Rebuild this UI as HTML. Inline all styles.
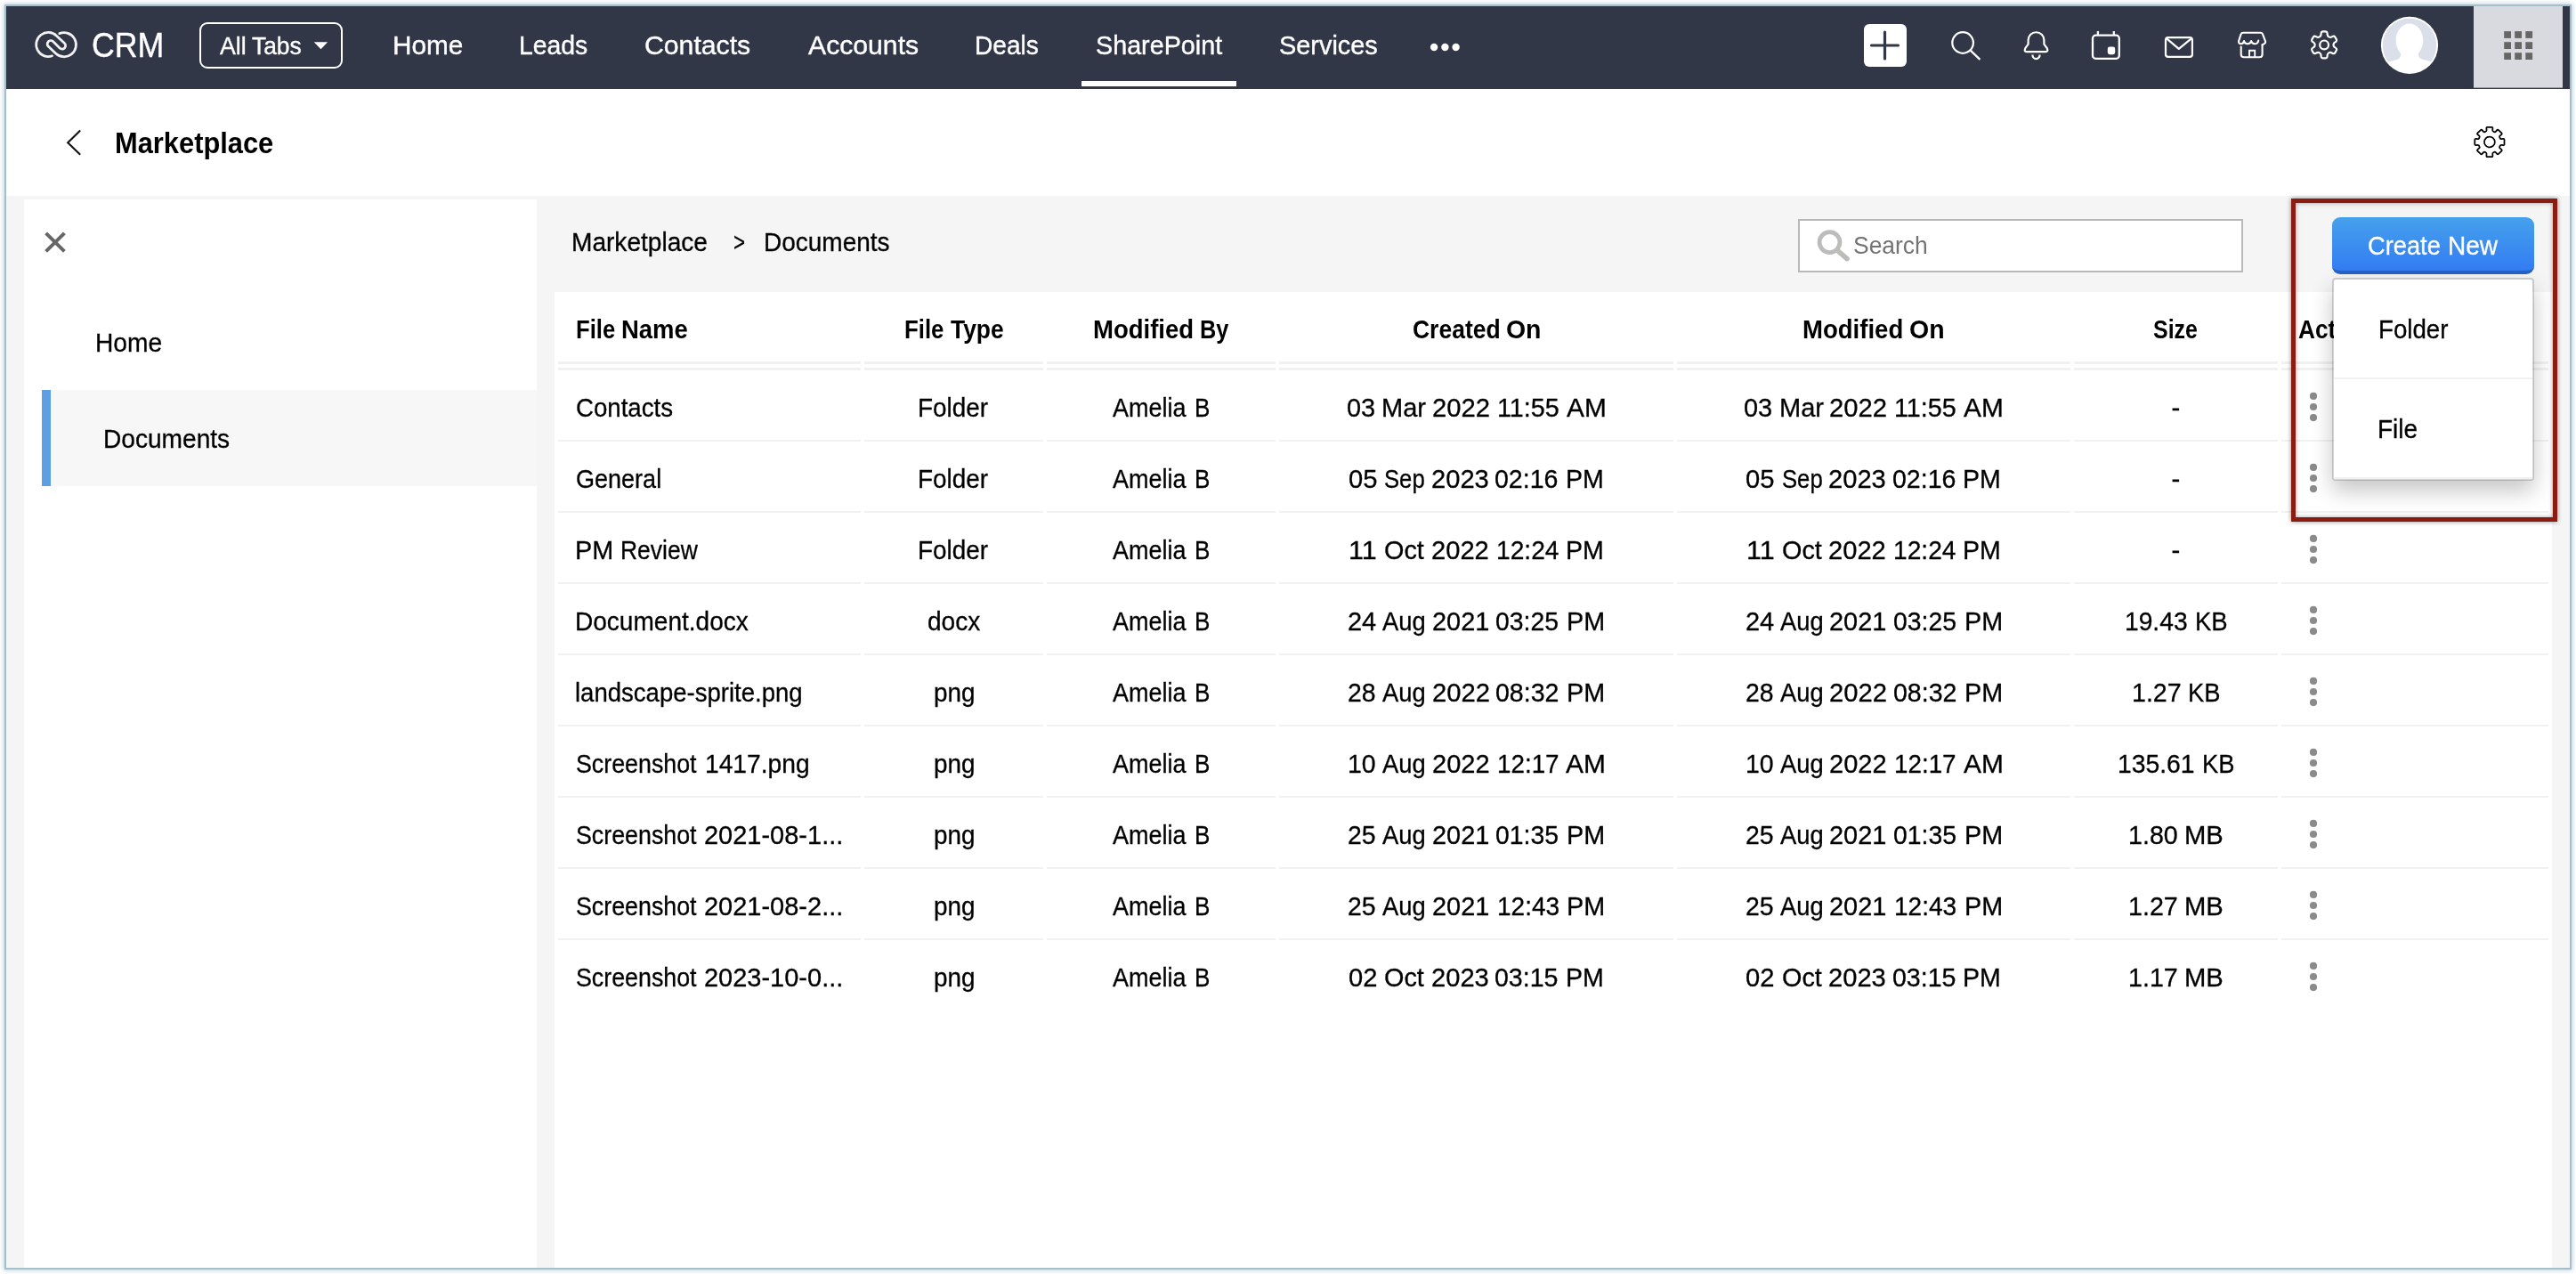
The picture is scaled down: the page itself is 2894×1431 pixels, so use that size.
<!DOCTYPE html>
<html lang="en">
<head>
<meta charset="utf-8">
<title>Marketplace - Documents</title>
<style>
html,body{margin:0;padding:0;background:#fff;}
body{width:2894px;height:1431px;overflow:hidden;position:relative;font-family:"Liberation Sans",sans-serif;}
#page{position:absolute;left:0;top:0;width:2894px;height:1431px;overflow:hidden;will-change:transform;}
#page>*{position:absolute;}
.t{position:absolute;white-space:pre;line-height:1;transform-origin:0 0;font-weight:400;font-family:"Liberation Sans",sans-serif;}
.t.b{font-weight:700;}
.ln{background:#f1f1f1;}
svg{overflow:visible;}
.kb{width:8.6px;height:8.6px;border-radius:50%;background:#8b8b8b;}
</style>
</head>
<body>
<div id="page">
<!-- frame -->
<div id="frame" style="left:5px;top:5px;width:2880px;height:1417px;border:2px solid #a5becc;box-shadow:0 0 5px 1px rgba(140,175,195,.55);"></div>
<!-- navbar -->
<div id="nav" style="left:7px;top:7px;width:2880px;height:93px;background:#323748;"></div>
<svg style="left:0;top:0;" width="2894" height="1431" viewBox="0 0 2894 1431"><path d="M58.61 62.81 A13.55 13.55 0 1 1 63.48 40.13 L72.44 48.54 A3.85 3.85 0 0 1 67.08 54.07 L59.57 46.58 A3.85 3.85 0 0 0 54.20 52.09 L62.58 60.03 A13.55 13.55 0 1 0 66.82 37.64" fill="none" stroke="#f1f1f1" stroke-width="2.75" stroke-linecap="round" stroke-linejoin="round"/><rect x="225" y="26" width="159" height="50" rx="8" fill="none" stroke="#fff" stroke-width="2"/><rect x="1215" y="91" width="174" height="6" fill="#fff"/><path d="M352.8 47.2 H368.1 L360.45 55.2 Z" fill="#fff"/><circle cx="1611.1" cy="53" r="4.2" fill="#fff"/><circle cx="1623.4" cy="53" r="4.2" fill="#fff"/><circle cx="1635.6" cy="53" r="4.2" fill="#fff"/><rect x="2094" y="27" width="48" height="48" rx="6" fill="#fff"/><path d="M2102.5 51 H2132.5 M2117.5 36 V66" stroke="#323748" stroke-width="3.2" stroke-linecap="round" fill="none"/><circle cx="2205.1" cy="48" r="11.8" fill="none" stroke="#fff" stroke-width="2.2"/><path d="M2213.5 56.4 L2224.4 66.9" stroke="#fff" stroke-width="2.3" fill="none"/><path d="M2278.6 49.6 L2275.3 54.2 Q2273.6 58.1 2276.8 58.1 H2298.2 Q2301.4 58.1 2299.7 54.2 L2296.4 49.6 V45.1 A8.9 8.9 0 0 0 2278.6 45.1 Z" fill="none" stroke="#fff" stroke-width="2.2" stroke-linejoin="round"/><path d="M2283.4 61.6 A4.1 4.6 0 0 0 2291.6 61.6" fill="none" stroke="#fff" stroke-width="2.2"/><rect x="2351" y="39.7" width="29.8" height="26.1" rx="3.4" fill="none" stroke="#fff" stroke-width="2.3"/><path d="M2356.9 34.9 V40 M2374.8 34.9 V40" stroke="#fff" stroke-width="2.3" fill="none"/><rect x="2367.8" y="52.6" width="8.4" height="8.6" rx="2.4" fill="#fff"/><rect x="2433" y="42.1" width="29.9" height="21.7" rx="2.8" fill="none" stroke="#fff" stroke-width="2.2"/><path d="M2433.6 42.8 L2447.8 54.8 L2462.4 42.8" fill="none" stroke="#fff" stroke-width="2.2" stroke-linejoin="round"/><path d="M2517.7 52.6 V61 Q2517.7 64.3 2521 64.3 H2538.3 Q2541.6 64.3 2541.6 61 V50.5" fill="none" stroke="#fff" stroke-width="2.1" stroke-linecap="round"/><path d="M2541.6 50.2 Q2545.5 49 2545.1 46.6 L2542.1 38.6 Q2541.6 36.8 2539.6 36.8 H2520.2 Q2518.2 36.8 2517.5 38.6 L2515.0 46.4 Q2514.9 49.4 2517.8 49.2 Q2520.4 49 2521 46 Q2521.6 49.2 2525 49.2 Q2528.5 49.2 2529.1 46 Q2529.8 49.2 2533.2 49.2 Q2536.6 49.2 2537.2 45.6" fill="none" stroke="#fff" stroke-width="2.1" stroke-linecap="round" stroke-linejoin="round"/><path d="M2527 64.2 V56.8 H2533.2 V64.2" fill="none" stroke="#fff" stroke-width="1.9"/><path d="M2605.90 41.39 Q2607.67 40.37 2607.60 38.33 L2607.59 37.90 Q2607.51 35.42 2609.99 35.42 L2612.21 35.42 Q2614.69 35.42 2614.61 37.90 L2614.60 38.33 Q2614.53 40.37 2616.30 41.39 L2616.30 41.39 Q2618.07 42.41 2619.80 41.34 L2620.17 41.11 Q2622.28 39.81 2623.52 41.95 L2624.63 43.87 Q2625.86 46.02 2623.68 47.19 L2623.30 47.40 Q2621.50 48.36 2621.50 50.40 L2621.50 50.40 Q2621.50 52.44 2623.30 53.40 L2623.68 53.61 Q2625.86 54.78 2624.63 56.93 L2623.52 58.85 Q2622.28 60.99 2620.17 59.69 L2619.80 59.46 Q2618.07 58.39 2616.30 59.41 L2616.30 59.41 Q2614.53 60.43 2614.60 62.47 L2614.61 62.90 Q2614.69 65.38 2612.21 65.38 L2609.99 65.38 Q2607.51 65.38 2607.59 62.90 L2607.60 62.47 Q2607.67 60.43 2605.90 59.41 L2605.90 59.41 Q2604.13 58.39 2602.40 59.46 L2602.03 59.69 Q2599.92 60.99 2598.68 58.85 L2597.57 56.93 Q2596.34 54.78 2598.52 53.61 L2598.90 53.40 Q2600.70 52.44 2600.70 50.40 L2600.70 50.40 Q2600.70 48.36 2598.90 47.40 L2598.52 47.19 Q2596.34 46.02 2597.57 43.87 L2598.68 41.95 Q2599.92 39.81 2602.03 41.11 L2602.40 41.34 Q2604.13 42.41 2605.90 41.39 Z" fill="none" stroke="#fff" stroke-width="2.2" stroke-linejoin="round"/><circle cx="2611.1" cy="50.4" r="4.9" fill="none" stroke="#fff" stroke-width="2.2"/><defs><clipPath id="avc"><circle cx="2707" cy="50.9" r="30.4"/></clipPath></defs><circle cx="2707" cy="50.9" r="32.1" fill="#fff"/><circle cx="2707" cy="50.9" r="30.2" fill="#dbdfe9"/><g clip-path="url(#avc)" fill="#fff"><ellipse cx="2706.9" cy="45.4" rx="15.3" ry="18.8"/><path d="M2697.5 54 L2697 62 Q2696.5 66.5 2691 67.6 Q2682 69.6 2676 73 V90 H2738 V72.5 Q2732 69 2724 67.3 Q2718 66.4 2717 62 L2716.5 54 Z"/></g><rect x="2779" y="7" width="100" height="91.6" fill="#d9dadf"/><rect x="2813.2" y="35.1" width="7.8" height="7.8" fill="#666"/><rect x="2813.2" y="47.2" width="7.8" height="7.8" fill="#666"/><rect x="2813.2" y="59.2" width="7.8" height="7.8" fill="#666"/><rect x="2825.2" y="35.1" width="7.8" height="7.8" fill="#666"/><rect x="2825.2" y="47.2" width="7.8" height="7.8" fill="#666"/><rect x="2825.2" y="59.2" width="7.8" height="7.8" fill="#666"/><rect x="2837.3" y="35.1" width="7.8" height="7.8" fill="#666"/><rect x="2837.3" y="47.2" width="7.8" height="7.8" fill="#666"/><rect x="2837.3" y="59.2" width="7.8" height="7.8" fill="#666"/></svg>
<!-- title bar -->
<svg style="left:0;top:0;" width="2894" height="1431" viewBox="0 0 2894 1431"><path d="M90.2 146.6 L76.2 160.2 L90.2 173.8" fill="none" stroke="#111" stroke-width="2.1"/><path d="M2792.55 147.78 Q2793.66 147.32 2793.56 146.13 L2793.38 144.09 Q2793.27 142.89 2794.47 142.89 L2799.33 142.89 Q2800.53 142.89 2800.42 144.09 L2800.24 146.13 Q2800.14 147.32 2801.25 147.78 L2802.11 148.14 Q2803.22 148.60 2803.99 147.68 L2805.31 146.11 Q2806.08 145.19 2806.93 146.04 L2810.36 149.47 Q2811.21 150.32 2810.29 151.09 L2808.72 152.41 Q2807.80 153.18 2808.26 154.29 L2808.62 155.15 Q2809.08 156.26 2810.27 156.16 L2812.31 155.98 Q2813.51 155.87 2813.51 157.07 L2813.51 161.93 Q2813.51 163.13 2812.31 163.02 L2810.27 162.84 Q2809.08 162.74 2808.62 163.85 L2808.26 164.71 Q2807.80 165.82 2808.72 166.59 L2810.29 167.91 Q2811.21 168.68 2810.36 169.53 L2806.93 172.96 Q2806.08 173.81 2805.31 172.89 L2803.99 171.32 Q2803.22 170.40 2802.11 170.86 L2801.25 171.22 Q2800.14 171.68 2800.24 172.87 L2800.42 174.91 Q2800.53 176.11 2799.33 176.11 L2794.47 176.11 Q2793.27 176.11 2793.38 174.91 L2793.56 172.87 Q2793.66 171.68 2792.55 171.22 L2791.69 170.86 Q2790.58 170.40 2789.81 171.32 L2788.49 172.89 Q2787.72 173.81 2786.87 172.96 L2783.44 169.53 Q2782.59 168.68 2783.51 167.91 L2785.08 166.59 Q2786.00 165.82 2785.54 164.71 L2785.18 163.85 Q2784.72 162.74 2783.53 162.84 L2781.49 163.02 Q2780.29 163.13 2780.29 161.93 L2780.29 157.07 Q2780.29 155.87 2781.49 155.98 L2783.53 156.16 Q2784.72 156.26 2785.18 155.15 L2785.54 154.29 Q2786.00 153.18 2785.08 152.41 L2783.51 151.09 Q2782.59 150.32 2783.44 149.47 L2786.87 146.04 Q2787.72 145.19 2788.49 146.11 L2789.81 147.68 Q2790.58 148.60 2791.69 148.14 Z" fill="none" stroke="#000" stroke-width="1.75" stroke-linejoin="round"/><circle cx="2796.9" cy="159.5" r="5.95" fill="none" stroke="#000" stroke-width="1.7"/></svg>
<!-- gray area -->
<div style="left:7px;top:220px;width:2880px;height:1204px;background:#f5f5f5;"></div>
<!-- sidebar -->
<div style="left:27px;top:224px;width:576px;height:1200px;background:#fff;"></div>
<div style="left:47px;top:438px;width:556px;height:108px;background:#f7f7f7;"></div>
<div style="left:47px;top:438px;width:10px;height:108px;background:#5c9fe2;"></div>
<svg style="left:0;top:0;" width="2894" height="1431" viewBox="0 0 2894 1431"><path d="M51.6 261.8 L72.4 282.4 M72.4 261.8 L51.6 282.4" stroke="#666" stroke-width="4" fill="none"/></svg>
<!-- table -->
<div style="left:623px;top:328px;width:2244px;height:1096px;background:#fff;"></div>
<div class="ln" style="left:627px;top:406px;width:340px;height:3px"></div>
<div class="ln" style="left:971px;top:406px;width:201px;height:3px"></div>
<div class="ln" style="left:1176px;top:406px;width:257px;height:3px"></div>
<div class="ln" style="left:1437px;top:406px;width:443px;height:3px"></div>
<div class="ln" style="left:1884px;top:406px;width:442px;height:3px"></div>
<div class="ln" style="left:2330px;top:406px;width:229px;height:3px"></div>
<div class="ln" style="left:2563px;top:406px;width:300px;height:3px"></div>
<div class="ln" style="left:627px;top:413px;width:340px;height:3px"></div>
<div class="ln" style="left:971px;top:413px;width:201px;height:3px"></div>
<div class="ln" style="left:1176px;top:413px;width:257px;height:3px"></div>
<div class="ln" style="left:1437px;top:413px;width:443px;height:3px"></div>
<div class="ln" style="left:1884px;top:413px;width:442px;height:3px"></div>
<div class="ln" style="left:2330px;top:413px;width:229px;height:3px"></div>
<div class="ln" style="left:2563px;top:413px;width:300px;height:3px"></div>
<div class="ln" style="left:627px;top:494px;width:340px;height:2px"></div>
<div class="ln" style="left:971px;top:494px;width:201px;height:2px"></div>
<div class="ln" style="left:1176px;top:494px;width:257px;height:2px"></div>
<div class="ln" style="left:1437px;top:494px;width:443px;height:2px"></div>
<div class="ln" style="left:1884px;top:494px;width:442px;height:2px"></div>
<div class="ln" style="left:2330px;top:494px;width:229px;height:2px"></div>
<div class="ln" style="left:2563px;top:494px;width:300px;height:2px"></div>
<div class="ln" style="left:627px;top:574px;width:340px;height:2px"></div>
<div class="ln" style="left:971px;top:574px;width:201px;height:2px"></div>
<div class="ln" style="left:1176px;top:574px;width:257px;height:2px"></div>
<div class="ln" style="left:1437px;top:574px;width:443px;height:2px"></div>
<div class="ln" style="left:1884px;top:574px;width:442px;height:2px"></div>
<div class="ln" style="left:2330px;top:574px;width:229px;height:2px"></div>
<div class="ln" style="left:2563px;top:574px;width:300px;height:2px"></div>
<div class="ln" style="left:627px;top:654px;width:340px;height:2px"></div>
<div class="ln" style="left:971px;top:654px;width:201px;height:2px"></div>
<div class="ln" style="left:1176px;top:654px;width:257px;height:2px"></div>
<div class="ln" style="left:1437px;top:654px;width:443px;height:2px"></div>
<div class="ln" style="left:1884px;top:654px;width:442px;height:2px"></div>
<div class="ln" style="left:2330px;top:654px;width:229px;height:2px"></div>
<div class="ln" style="left:2563px;top:654px;width:300px;height:2px"></div>
<div class="ln" style="left:627px;top:734px;width:340px;height:2px"></div>
<div class="ln" style="left:971px;top:734px;width:201px;height:2px"></div>
<div class="ln" style="left:1176px;top:734px;width:257px;height:2px"></div>
<div class="ln" style="left:1437px;top:734px;width:443px;height:2px"></div>
<div class="ln" style="left:1884px;top:734px;width:442px;height:2px"></div>
<div class="ln" style="left:2330px;top:734px;width:229px;height:2px"></div>
<div class="ln" style="left:2563px;top:734px;width:300px;height:2px"></div>
<div class="ln" style="left:627px;top:814px;width:340px;height:2px"></div>
<div class="ln" style="left:971px;top:814px;width:201px;height:2px"></div>
<div class="ln" style="left:1176px;top:814px;width:257px;height:2px"></div>
<div class="ln" style="left:1437px;top:814px;width:443px;height:2px"></div>
<div class="ln" style="left:1884px;top:814px;width:442px;height:2px"></div>
<div class="ln" style="left:2330px;top:814px;width:229px;height:2px"></div>
<div class="ln" style="left:2563px;top:814px;width:300px;height:2px"></div>
<div class="ln" style="left:627px;top:894px;width:340px;height:2px"></div>
<div class="ln" style="left:971px;top:894px;width:201px;height:2px"></div>
<div class="ln" style="left:1176px;top:894px;width:257px;height:2px"></div>
<div class="ln" style="left:1437px;top:894px;width:443px;height:2px"></div>
<div class="ln" style="left:1884px;top:894px;width:442px;height:2px"></div>
<div class="ln" style="left:2330px;top:894px;width:229px;height:2px"></div>
<div class="ln" style="left:2563px;top:894px;width:300px;height:2px"></div>
<div class="ln" style="left:627px;top:974px;width:340px;height:2px"></div>
<div class="ln" style="left:971px;top:974px;width:201px;height:2px"></div>
<div class="ln" style="left:1176px;top:974px;width:257px;height:2px"></div>
<div class="ln" style="left:1437px;top:974px;width:443px;height:2px"></div>
<div class="ln" style="left:1884px;top:974px;width:442px;height:2px"></div>
<div class="ln" style="left:2330px;top:974px;width:229px;height:2px"></div>
<div class="ln" style="left:2563px;top:974px;width:300px;height:2px"></div>
<div class="ln" style="left:627px;top:1054px;width:340px;height:2px"></div>
<div class="ln" style="left:971px;top:1054px;width:201px;height:2px"></div>
<div class="ln" style="left:1176px;top:1054px;width:257px;height:2px"></div>
<div class="ln" style="left:1437px;top:1054px;width:443px;height:2px"></div>
<div class="ln" style="left:1884px;top:1054px;width:442px;height:2px"></div>
<div class="ln" style="left:2330px;top:1054px;width:229px;height:2px"></div>
<div class="ln" style="left:2563px;top:1054px;width:300px;height:2px"></div>
<svg style="left:0;top:0;" width="2894" height="1431" viewBox="0 0 2894 1431"><g fill="#8b8b8b"><circle cx="2599" cy="444.9" r="4.1"/><circle cx="2599" cy="457.0" r="4.1"/><circle cx="2599" cy="469.1" r="4.1"/><circle cx="2599" cy="524.9" r="4.1"/><circle cx="2599" cy="537.0" r="4.1"/><circle cx="2599" cy="549.1" r="4.1"/><circle cx="2599" cy="604.9" r="4.1"/><circle cx="2599" cy="617.0" r="4.1"/><circle cx="2599" cy="629.1" r="4.1"/><circle cx="2599" cy="684.9" r="4.1"/><circle cx="2599" cy="697.0" r="4.1"/><circle cx="2599" cy="709.1" r="4.1"/><circle cx="2599" cy="764.9" r="4.1"/><circle cx="2599" cy="777.0" r="4.1"/><circle cx="2599" cy="789.1" r="4.1"/><circle cx="2599" cy="844.9" r="4.1"/><circle cx="2599" cy="857.0" r="4.1"/><circle cx="2599" cy="869.1" r="4.1"/><circle cx="2599" cy="924.9" r="4.1"/><circle cx="2599" cy="937.0" r="4.1"/><circle cx="2599" cy="949.1" r="4.1"/><circle cx="2599" cy="1004.9" r="4.1"/><circle cx="2599" cy="1017.0" r="4.1"/><circle cx="2599" cy="1029.1" r="4.1"/><circle cx="2599" cy="1084.9" r="4.1"/><circle cx="2599" cy="1097.0" r="4.1"/><circle cx="2599" cy="1109.1" r="4.1"/></g></svg>
<div style="left:2020px;top:246px;width:496px;height:56px;border:2px solid #b9b9b9;background:#fff;"></div>
<svg style="left:0;top:0;" width="2894" height="1431" viewBox="0 0 2894 1431"><circle cx="2055.5" cy="272.1" r="11.45" fill="none" stroke="#bcbcbb" stroke-width="4.8"/><path d="M2064.6 281.6 L2075.0 290.6" stroke="#bcbcbb" stroke-width="5.6" stroke-linecap="round" fill="none"/></svg>
<span class="t" style="left:102.97px;top:32.00px;font-size:38.95px;color:#fff;transform:scaleX(0.9167);-webkit-text-stroke:0.4px #fff;">CRM</span>
<span class="t" style="left:246.60px;top:38.00px;font-size:28.05px;color:#fff;transform:scaleX(0.9500);-webkit-text-stroke:0.4px #fff;">All</span>
<span class="t" style="left:282.70px;top:38.00px;font-size:28.05px;color:#fff;transform:scaleX(0.9407);-webkit-text-stroke:0.4px #fff;">Tabs</span>
<span class="t" style="left:440.94px;top:35.00px;font-size:30.38px;color:#fff;transform:scaleX(0.9782);-webkit-text-stroke:0.4px #fff;">Home</span>
<span class="t" style="left:583.43px;top:35.00px;font-size:30.38px;color:#fff;transform:scaleX(0.9338);-webkit-text-stroke:0.4px #fff;">Leads</span>
<span class="t" style="left:724.21px;top:35.00px;font-size:30.38px;color:#fff;transform:scaleX(0.9941);-webkit-text-stroke:0.4px #fff;">Contacts</span>
<span class="t" style="left:908.00px;top:35.00px;font-size:30.38px;color:#fff;transform:scaleX(0.9935);-webkit-text-stroke:0.4px #fff;">Accounts</span>
<span class="t" style="left:1095.25px;top:35.00px;font-size:30.38px;color:#fff;transform:scaleX(0.9253);-webkit-text-stroke:0.4px #fff;">Deals</span>
<span class="t" style="left:1230.95px;top:35.00px;font-size:30.38px;color:#fff;transform:scaleX(0.9456);-webkit-text-stroke:0.4px #fff;">SharePoint</span>
<span class="t" style="left:1436.65px;top:35.00px;font-size:30.38px;color:#fff;transform:scaleX(0.9513);-webkit-text-stroke:0.4px #fff;">Services</span>
<span class="t b" style="left:128.74px;top:144.00px;font-size:33.14px;color:#000;transform:scaleX(0.9309);">Marketplace</span>
<span class="t" style="left:106.70px;top:370.00px;font-size:29.65px;color:#000;transform:scaleX(0.9500);-webkit-text-stroke:0.3px #000;">Home</span>
<span class="t" style="left:116.30px;top:478.00px;font-size:29.65px;color:#000;transform:scaleX(0.9483);-webkit-text-stroke:0.3px #000;">Documents</span>
<span class="t" style="left:642.29px;top:257.00px;font-size:29.36px;color:#000;transform:scaleX(0.9567);-webkit-text-stroke:0.3px #000;">Marketplace</span>
<span class="t" style="left:824.04px;top:257.00px;font-size:29.36px;color:#000;transform:scaleX(0.7600);-webkit-text-stroke:0.3px #000;">&gt;</span>
<span class="t" style="left:857.89px;top:257.00px;font-size:29.36px;color:#000;transform:scaleX(0.9534);-webkit-text-stroke:0.3px #000;">Documents</span>
<span class="t" style="left:2082.44px;top:262.00px;font-size:27.47px;color:#737373;transform:scaleX(0.9624);">Search</span>
<span class="t b" style="left:646.55px;top:355.00px;font-size:29.36px;color:#000;transform:scaleX(0.8729);">File</span>
<span class="t b" style="left:698.03px;top:355.00px;font-size:29.36px;color:#000;transform:scaleX(0.9351);">Name</span>
<span class="t b" style="left:1016.44px;top:355.00px;font-size:29.36px;color:#000;transform:scaleX(0.8792);">File</span>
<span class="t b" style="left:1068.40px;top:355.00px;font-size:29.36px;color:#000;transform:scaleX(0.8985);">Type</span>
<span class="t b" style="left:1228.22px;top:355.00px;font-size:29.36px;color:#000;transform:scaleX(0.9376);">Modified</span>
<span class="t b" style="left:1347.78px;top:355.00px;font-size:29.36px;color:#000;transform:scaleX(0.8611);">By</span>
<span class="t b" style="left:1586.50px;top:355.00px;font-size:29.36px;color:#000;transform:scaleX(0.9019);">Created</span>
<span class="t b" style="left:1691.83px;top:355.00px;font-size:29.36px;color:#000;transform:scaleX(0.9684);">On</span>
<span class="t b" style="left:2025.12px;top:355.00px;font-size:29.36px;color:#000;transform:scaleX(0.9385);">Modified</span>
<span class="t b" style="left:2144.63px;top:355.00px;font-size:29.36px;color:#000;transform:scaleX(0.9711);">On</span>
<span class="t b" style="left:2419.35px;top:355.00px;font-size:29.36px;color:#000;transform:scaleX(0.8491);">Size</span>
<span class="t b" style="left:2582.11px;top:355.00px;font-size:29.36px;color:#000;transform:scaleX(0.8913);">Act</span>
<span class="t" style="left:647.06px;top:443.00px;font-size:29.36px;color:#000;transform:scaleX(0.9412);-webkit-text-stroke:0.3px #000;">Contacts</span>
<span class="t" style="left:1031.40px;top:443.00px;font-size:29.36px;color:#000;transform:scaleX(0.9506);-webkit-text-stroke:0.3px #000;">Folder</span>
<span class="t" style="left:1250.20px;top:443.00px;font-size:29.36px;color:#000;transform:scaleX(0.9178);-webkit-text-stroke:0.3px #000;">Amelia</span>
<span class="t" style="left:1342.22px;top:443.00px;font-size:29.36px;color:#000;transform:scaleX(0.8875);-webkit-text-stroke:0.3px #000;">B</span>
<span class="t" style="left:1512.52px;top:443.00px;font-size:29.36px;color:#000;transform:scaleX(0.9839);-webkit-text-stroke:0.3px #000;">03</span>
<span class="t" style="left:1552.42px;top:443.00px;font-size:29.36px;color:#000;transform:scaleX(0.9896);-webkit-text-stroke:0.3px #000;">Mar</span>
<span class="t" style="left:1608.70px;top:443.00px;font-size:29.36px;color:#000;transform:scaleX(0.9952);-webkit-text-stroke:0.3px #000;">2022</span>
<span class="t" style="left:1681.94px;top:443.00px;font-size:29.36px;color:#000;transform:scaleX(0.9779);-webkit-text-stroke:0.3px #000;">11:55</span>
<span class="t" style="left:1759.90px;top:443.00px;font-size:29.36px;color:#000;transform:scaleX(1.0167);-webkit-text-stroke:0.3px #000;">AM</span>
<span class="t" style="left:1958.92px;top:443.00px;font-size:29.36px;color:#000;transform:scaleX(0.9839);-webkit-text-stroke:0.3px #000;">03</span>
<span class="t" style="left:1998.82px;top:443.00px;font-size:29.36px;color:#000;transform:scaleX(0.9896);-webkit-text-stroke:0.3px #000;">Mar</span>
<span class="t" style="left:2055.10px;top:443.00px;font-size:29.36px;color:#000;transform:scaleX(0.9952);-webkit-text-stroke:0.3px #000;">2022</span>
<span class="t" style="left:2128.34px;top:443.00px;font-size:29.36px;color:#000;transform:scaleX(0.9779);-webkit-text-stroke:0.3px #000;">11:55</span>
<span class="t" style="left:2206.30px;top:443.00px;font-size:29.36px;color:#000;transform:scaleX(1.0167);-webkit-text-stroke:0.3px #000;">AM</span>
<span class="t" style="left:2439.40px;top:443.00px;font-size:29.36px;color:#000;transform:scaleX(1.0000);-webkit-text-stroke:0.3px #000;">-</span>
<span class="t" style="left:647.08px;top:523.00px;font-size:29.36px;color:#000;transform:scaleX(0.9206);-webkit-text-stroke:0.3px #000;">General</span>
<span class="t" style="left:1031.40px;top:523.00px;font-size:29.36px;color:#000;transform:scaleX(0.9506);-webkit-text-stroke:0.3px #000;">Folder</span>
<span class="t" style="left:1250.20px;top:523.00px;font-size:29.36px;color:#000;transform:scaleX(0.9178);-webkit-text-stroke:0.3px #000;">Amelia</span>
<span class="t" style="left:1342.22px;top:523.00px;font-size:29.36px;color:#000;transform:scaleX(0.8875);-webkit-text-stroke:0.3px #000;">B</span>
<span class="t" style="left:1514.51px;top:523.00px;font-size:29.36px;color:#000;transform:scaleX(0.9935);-webkit-text-stroke:0.3px #000;">05</span>
<span class="t" style="left:1555.23px;top:523.00px;font-size:29.36px;color:#000;transform:scaleX(0.8740);-webkit-text-stroke:0.3px #000;">Sep</span>
<span class="t" style="left:1607.51px;top:523.00px;font-size:29.36px;color:#000;transform:scaleX(0.9921);-webkit-text-stroke:0.3px #000;">2023</span>
<span class="t" style="left:1679.13px;top:523.00px;font-size:29.36px;color:#000;transform:scaleX(0.9722);-webkit-text-stroke:0.3px #000;">02:16</span>
<span class="t" style="left:1758.86px;top:523.00px;font-size:29.36px;color:#000;transform:scaleX(0.9725);-webkit-text-stroke:0.3px #000;">PM</span>
<span class="t" style="left:1960.91px;top:523.00px;font-size:29.36px;color:#000;transform:scaleX(0.9935);-webkit-text-stroke:0.3px #000;">05</span>
<span class="t" style="left:2001.63px;top:523.00px;font-size:29.36px;color:#000;transform:scaleX(0.8740);-webkit-text-stroke:0.3px #000;">Sep</span>
<span class="t" style="left:2053.91px;top:523.00px;font-size:29.36px;color:#000;transform:scaleX(0.9921);-webkit-text-stroke:0.3px #000;">2023</span>
<span class="t" style="left:2125.53px;top:523.00px;font-size:29.36px;color:#000;transform:scaleX(0.9722);-webkit-text-stroke:0.3px #000;">02:16</span>
<span class="t" style="left:2205.25px;top:523.00px;font-size:29.36px;color:#000;transform:scaleX(0.9725);-webkit-text-stroke:0.3px #000;">PM</span>
<span class="t" style="left:2439.40px;top:523.00px;font-size:29.36px;color:#000;transform:scaleX(1.0000);-webkit-text-stroke:0.3px #000;">-</span>
<span class="t" style="left:646.34px;top:603.00px;font-size:29.36px;color:#000;transform:scaleX(0.9800);-webkit-text-stroke:0.3px #000;">PM</span>
<span class="t" style="left:697.30px;top:603.00px;font-size:29.36px;color:#000;transform:scaleX(0.9011);-webkit-text-stroke:0.3px #000;">Review</span>
<span class="t" style="left:1031.40px;top:603.00px;font-size:29.36px;color:#000;transform:scaleX(0.9506);-webkit-text-stroke:0.3px #000;">Folder</span>
<span class="t" style="left:1250.20px;top:603.00px;font-size:29.36px;color:#000;transform:scaleX(0.9178);-webkit-text-stroke:0.3px #000;">Amelia</span>
<span class="t" style="left:1342.22px;top:603.00px;font-size:29.36px;color:#000;transform:scaleX(0.8875);-webkit-text-stroke:0.3px #000;">B</span>
<span class="t" style="left:1515.23px;top:603.00px;font-size:29.36px;color:#000;transform:scaleX(1.0357);-webkit-text-stroke:0.3px #000;">11</span>
<span class="t" style="left:1555.12px;top:603.00px;font-size:29.36px;color:#000;transform:scaleX(0.9800);-webkit-text-stroke:0.3px #000;">Oct</span>
<span class="t" style="left:1607.81px;top:603.00px;font-size:29.36px;color:#000;transform:scaleX(0.9921);-webkit-text-stroke:0.3px #000;">2022</span>
<span class="t" style="left:1680.78px;top:603.00px;font-size:29.36px;color:#000;transform:scaleX(0.9592);-webkit-text-stroke:0.3px #000;">12:24</span>
<span class="t" style="left:1758.86px;top:603.00px;font-size:29.36px;color:#000;transform:scaleX(0.9725);-webkit-text-stroke:0.3px #000;">PM</span>
<span class="t" style="left:1961.63px;top:603.00px;font-size:29.36px;color:#000;transform:scaleX(1.0357);-webkit-text-stroke:0.3px #000;">11</span>
<span class="t" style="left:2001.52px;top:603.00px;font-size:29.36px;color:#000;transform:scaleX(0.9800);-webkit-text-stroke:0.3px #000;">Oct</span>
<span class="t" style="left:2054.21px;top:603.00px;font-size:29.36px;color:#000;transform:scaleX(0.9921);-webkit-text-stroke:0.3px #000;">2022</span>
<span class="t" style="left:2127.18px;top:603.00px;font-size:29.36px;color:#000;transform:scaleX(0.9592);-webkit-text-stroke:0.3px #000;">12:24</span>
<span class="t" style="left:2205.25px;top:603.00px;font-size:29.36px;color:#000;transform:scaleX(0.9725);-webkit-text-stroke:0.3px #000;">PM</span>
<span class="t" style="left:2439.40px;top:603.00px;font-size:29.36px;color:#000;transform:scaleX(1.0000);-webkit-text-stroke:0.3px #000;">-</span>
<span class="t" style="left:646.39px;top:683.00px;font-size:29.36px;color:#000;transform:scaleX(0.9550);-webkit-text-stroke:0.3px #000;">Document.docx</span>
<span class="t" style="left:1041.69px;top:683.00px;font-size:29.36px;color:#000;transform:scaleX(0.9557);-webkit-text-stroke:0.3px #000;">docx</span>
<span class="t" style="left:1250.20px;top:683.00px;font-size:29.36px;color:#000;transform:scaleX(0.9178);-webkit-text-stroke:0.3px #000;">Amelia</span>
<span class="t" style="left:1342.22px;top:683.00px;font-size:29.36px;color:#000;transform:scaleX(0.8875);-webkit-text-stroke:0.3px #000;">B</span>
<span class="t" style="left:1514.21px;top:683.00px;font-size:29.36px;color:#000;transform:scaleX(0.9871);-webkit-text-stroke:0.3px #000;">24</span>
<span class="t" style="left:1553.20px;top:683.00px;font-size:29.36px;color:#000;transform:scaleX(0.9314);-webkit-text-stroke:0.3px #000;">Aug</span>
<span class="t" style="left:1608.71px;top:683.00px;font-size:29.36px;color:#000;transform:scaleX(0.9857);-webkit-text-stroke:0.3px #000;">2021</span>
<span class="t" style="left:1680.33px;top:683.00px;font-size:29.36px;color:#000;transform:scaleX(0.9653);-webkit-text-stroke:0.3px #000;">03:25</span>
<span class="t" style="left:1760.24px;top:683.00px;font-size:29.36px;color:#000;transform:scaleX(0.9800);-webkit-text-stroke:0.3px #000;">PM</span>
<span class="t" style="left:1960.61px;top:683.00px;font-size:29.36px;color:#000;transform:scaleX(0.9871);-webkit-text-stroke:0.3px #000;">24</span>
<span class="t" style="left:1999.60px;top:683.00px;font-size:29.36px;color:#000;transform:scaleX(0.9314);-webkit-text-stroke:0.3px #000;">Aug</span>
<span class="t" style="left:2055.11px;top:683.00px;font-size:29.36px;color:#000;transform:scaleX(0.9857);-webkit-text-stroke:0.3px #000;">2021</span>
<span class="t" style="left:2126.73px;top:683.00px;font-size:29.36px;color:#000;transform:scaleX(0.9653);-webkit-text-stroke:0.3px #000;">03:25</span>
<span class="t" style="left:2206.64px;top:683.00px;font-size:29.36px;color:#000;transform:scaleX(0.9800);-webkit-text-stroke:0.3px #000;">PM</span>
<span class="t" style="left:2386.78px;top:683.00px;font-size:29.36px;color:#000;transform:scaleX(0.9606);-webkit-text-stroke:0.3px #000;">19.43</span>
<span class="t" style="left:2465.73px;top:683.00px;font-size:29.36px;color:#000;transform:scaleX(0.9361);-webkit-text-stroke:0.3px #000;">KB</span>
<span class="t" style="left:646.42px;top:763.00px;font-size:29.36px;color:#000;transform:scaleX(0.9379);-webkit-text-stroke:0.3px #000;">landscape-sprite.png</span>
<span class="t" style="left:1048.55px;top:763.00px;font-size:29.36px;color:#000;transform:scaleX(0.9489);-webkit-text-stroke:0.3px #000;">png</span>
<span class="t" style="left:1250.20px;top:763.00px;font-size:29.36px;color:#000;transform:scaleX(0.9178);-webkit-text-stroke:0.3px #000;">Amelia</span>
<span class="t" style="left:1342.22px;top:763.00px;font-size:29.36px;color:#000;transform:scaleX(0.8875);-webkit-text-stroke:0.3px #000;">B</span>
<span class="t" style="left:1514.23px;top:763.00px;font-size:29.36px;color:#000;transform:scaleX(0.9677);-webkit-text-stroke:0.3px #000;">28</span>
<span class="t" style="left:1553.20px;top:763.00px;font-size:29.36px;color:#000;transform:scaleX(0.9314);-webkit-text-stroke:0.3px #000;">Aug</span>
<span class="t" style="left:1608.70px;top:763.00px;font-size:29.36px;color:#000;transform:scaleX(0.9952);-webkit-text-stroke:0.3px #000;">2022</span>
<span class="t" style="left:1680.33px;top:763.00px;font-size:29.36px;color:#000;transform:scaleX(0.9722);-webkit-text-stroke:0.3px #000;">08:32</span>
<span class="t" style="left:1760.24px;top:763.00px;font-size:29.36px;color:#000;transform:scaleX(0.9800);-webkit-text-stroke:0.3px #000;">PM</span>
<span class="t" style="left:1960.63px;top:763.00px;font-size:29.36px;color:#000;transform:scaleX(0.9677);-webkit-text-stroke:0.3px #000;">28</span>
<span class="t" style="left:1999.60px;top:763.00px;font-size:29.36px;color:#000;transform:scaleX(0.9314);-webkit-text-stroke:0.3px #000;">Aug</span>
<span class="t" style="left:2055.10px;top:763.00px;font-size:29.36px;color:#000;transform:scaleX(0.9952);-webkit-text-stroke:0.3px #000;">2022</span>
<span class="t" style="left:2126.73px;top:763.00px;font-size:29.36px;color:#000;transform:scaleX(0.9722);-webkit-text-stroke:0.3px #000;">08:32</span>
<span class="t" style="left:2206.64px;top:763.00px;font-size:29.36px;color:#000;transform:scaleX(0.9800);-webkit-text-stroke:0.3px #000;">PM</span>
<span class="t" style="left:2394.85px;top:763.00px;font-size:29.36px;color:#000;transform:scaleX(0.9741);-webkit-text-stroke:0.3px #000;">1.27</span>
<span class="t" style="left:2457.64px;top:763.00px;font-size:29.36px;color:#000;transform:scaleX(0.9306);-webkit-text-stroke:0.3px #000;">KB</span>
<span class="t" style="left:646.99px;top:843.00px;font-size:29.36px;color:#000;transform:scaleX(0.9128);-webkit-text-stroke:0.3px #000;">Screenshot</span>
<span class="t" style="left:791.78px;top:843.00px;font-size:29.36px;color:#000;transform:scaleX(0.9605);-webkit-text-stroke:0.3px #000;">1417.png</span>
<span class="t" style="left:1048.55px;top:843.00px;font-size:29.36px;color:#000;transform:scaleX(0.9489);-webkit-text-stroke:0.3px #000;">png</span>
<span class="t" style="left:1250.20px;top:843.00px;font-size:29.36px;color:#000;transform:scaleX(0.9178);-webkit-text-stroke:0.3px #000;">Amelia</span>
<span class="t" style="left:1342.22px;top:843.00px;font-size:29.36px;color:#000;transform:scaleX(0.8875);-webkit-text-stroke:0.3px #000;">B</span>
<span class="t" style="left:1514.16px;top:843.00px;font-size:29.36px;color:#000;transform:scaleX(0.9700);-webkit-text-stroke:0.3px #000;">10</span>
<span class="t" style="left:1553.20px;top:843.00px;font-size:29.36px;color:#000;transform:scaleX(0.9314);-webkit-text-stroke:0.3px #000;">Aug</span>
<span class="t" style="left:1608.71px;top:843.00px;font-size:29.36px;color:#000;transform:scaleX(0.9889);-webkit-text-stroke:0.3px #000;">2022</span>
<span class="t" style="left:1681.71px;top:843.00px;font-size:29.36px;color:#000;transform:scaleX(0.9465);-webkit-text-stroke:0.3px #000;">12:17</span>
<span class="t" style="left:1759.10px;top:843.00px;font-size:29.36px;color:#000;transform:scaleX(1.0190);-webkit-text-stroke:0.3px #000;">AM</span>
<span class="t" style="left:1960.56px;top:843.00px;font-size:29.36px;color:#000;transform:scaleX(0.9700);-webkit-text-stroke:0.3px #000;">10</span>
<span class="t" style="left:1999.60px;top:843.00px;font-size:29.36px;color:#000;transform:scaleX(0.9314);-webkit-text-stroke:0.3px #000;">Aug</span>
<span class="t" style="left:2055.11px;top:843.00px;font-size:29.36px;color:#000;transform:scaleX(0.9889);-webkit-text-stroke:0.3px #000;">2022</span>
<span class="t" style="left:2128.11px;top:843.00px;font-size:29.36px;color:#000;transform:scaleX(0.9465);-webkit-text-stroke:0.3px #000;">12:17</span>
<span class="t" style="left:2205.50px;top:843.00px;font-size:29.36px;color:#000;transform:scaleX(1.0190);-webkit-text-stroke:0.3px #000;">AM</span>
<span class="t" style="left:2378.77px;top:843.00px;font-size:29.36px;color:#000;transform:scaleX(0.9644);-webkit-text-stroke:0.3px #000;">135.61</span>
<span class="t" style="left:2473.84px;top:843.00px;font-size:29.36px;color:#000;transform:scaleX(0.9306);-webkit-text-stroke:0.3px #000;">KB</span>
<span class="t" style="left:646.99px;top:923.00px;font-size:29.36px;color:#000;transform:scaleX(0.9128);-webkit-text-stroke:0.3px #000;">Screenshot</span>
<span class="t" style="left:791.01px;top:923.00px;font-size:29.36px;color:#000;transform:scaleX(0.9871);-webkit-text-stroke:0.3px #000;">2021-08-1...</span>
<span class="t" style="left:1048.55px;top:923.00px;font-size:29.36px;color:#000;transform:scaleX(0.9489);-webkit-text-stroke:0.3px #000;">png</span>
<span class="t" style="left:1250.20px;top:923.00px;font-size:29.36px;color:#000;transform:scaleX(0.9178);-webkit-text-stroke:0.3px #000;">Amelia</span>
<span class="t" style="left:1342.22px;top:923.00px;font-size:29.36px;color:#000;transform:scaleX(0.8875);-webkit-text-stroke:0.3px #000;">B</span>
<span class="t" style="left:1514.23px;top:923.00px;font-size:29.36px;color:#000;transform:scaleX(0.9677);-webkit-text-stroke:0.3px #000;">25</span>
<span class="t" style="left:1553.20px;top:923.00px;font-size:29.36px;color:#000;transform:scaleX(0.9314);-webkit-text-stroke:0.3px #000;">Aug</span>
<span class="t" style="left:1608.71px;top:923.00px;font-size:29.36px;color:#000;transform:scaleX(0.9857);-webkit-text-stroke:0.3px #000;">2021</span>
<span class="t" style="left:1680.33px;top:923.00px;font-size:29.36px;color:#000;transform:scaleX(0.9653);-webkit-text-stroke:0.3px #000;">01:35</span>
<span class="t" style="left:1760.24px;top:923.00px;font-size:29.36px;color:#000;transform:scaleX(0.9800);-webkit-text-stroke:0.3px #000;">PM</span>
<span class="t" style="left:1960.63px;top:923.00px;font-size:29.36px;color:#000;transform:scaleX(0.9677);-webkit-text-stroke:0.3px #000;">25</span>
<span class="t" style="left:1999.60px;top:923.00px;font-size:29.36px;color:#000;transform:scaleX(0.9314);-webkit-text-stroke:0.3px #000;">Aug</span>
<span class="t" style="left:2055.11px;top:923.00px;font-size:29.36px;color:#000;transform:scaleX(0.9857);-webkit-text-stroke:0.3px #000;">2021</span>
<span class="t" style="left:2126.73px;top:923.00px;font-size:29.36px;color:#000;transform:scaleX(0.9653);-webkit-text-stroke:0.3px #000;">01:35</span>
<span class="t" style="left:2206.64px;top:923.00px;font-size:29.36px;color:#000;transform:scaleX(0.9800);-webkit-text-stroke:0.3px #000;">PM</span>
<span class="t" style="left:2391.35px;top:923.00px;font-size:29.36px;color:#000;transform:scaleX(0.9759);-webkit-text-stroke:0.3px #000;">1.80</span>
<span class="t" style="left:2453.81px;top:923.00px;font-size:29.36px;color:#000;transform:scaleX(0.9951);-webkit-text-stroke:0.3px #000;">MB</span>
<span class="t" style="left:646.99px;top:1003.00px;font-size:29.36px;color:#000;transform:scaleX(0.9128);-webkit-text-stroke:0.3px #000;">Screenshot</span>
<span class="t" style="left:791.01px;top:1003.00px;font-size:29.36px;color:#000;transform:scaleX(0.9871);-webkit-text-stroke:0.3px #000;">2021-08-2...</span>
<span class="t" style="left:1048.55px;top:1003.00px;font-size:29.36px;color:#000;transform:scaleX(0.9489);-webkit-text-stroke:0.3px #000;">png</span>
<span class="t" style="left:1250.20px;top:1003.00px;font-size:29.36px;color:#000;transform:scaleX(0.9178);-webkit-text-stroke:0.3px #000;">Amelia</span>
<span class="t" style="left:1342.22px;top:1003.00px;font-size:29.36px;color:#000;transform:scaleX(0.8875);-webkit-text-stroke:0.3px #000;">B</span>
<span class="t" style="left:1514.23px;top:1003.00px;font-size:29.36px;color:#000;transform:scaleX(0.9677);-webkit-text-stroke:0.3px #000;">25</span>
<span class="t" style="left:1553.20px;top:1003.00px;font-size:29.36px;color:#000;transform:scaleX(0.9314);-webkit-text-stroke:0.3px #000;">Aug</span>
<span class="t" style="left:1608.71px;top:1003.00px;font-size:29.36px;color:#000;transform:scaleX(0.9857);-webkit-text-stroke:0.3px #000;">2021</span>
<span class="t" style="left:1681.69px;top:1003.00px;font-size:29.36px;color:#000;transform:scaleX(0.9535);-webkit-text-stroke:0.3px #000;">12:43</span>
<span class="t" style="left:1760.24px;top:1003.00px;font-size:29.36px;color:#000;transform:scaleX(0.9800);-webkit-text-stroke:0.3px #000;">PM</span>
<span class="t" style="left:1960.63px;top:1003.00px;font-size:29.36px;color:#000;transform:scaleX(0.9677);-webkit-text-stroke:0.3px #000;">25</span>
<span class="t" style="left:1999.60px;top:1003.00px;font-size:29.36px;color:#000;transform:scaleX(0.9314);-webkit-text-stroke:0.3px #000;">Aug</span>
<span class="t" style="left:2055.11px;top:1003.00px;font-size:29.36px;color:#000;transform:scaleX(0.9857);-webkit-text-stroke:0.3px #000;">2021</span>
<span class="t" style="left:2128.09px;top:1003.00px;font-size:29.36px;color:#000;transform:scaleX(0.9535);-webkit-text-stroke:0.3px #000;">12:43</span>
<span class="t" style="left:2206.64px;top:1003.00px;font-size:29.36px;color:#000;transform:scaleX(0.9800);-webkit-text-stroke:0.3px #000;">PM</span>
<span class="t" style="left:2391.35px;top:1003.00px;font-size:29.36px;color:#000;transform:scaleX(0.9759);-webkit-text-stroke:0.3px #000;">1.27</span>
<span class="t" style="left:2453.81px;top:1003.00px;font-size:29.36px;color:#000;transform:scaleX(0.9951);-webkit-text-stroke:0.3px #000;">MB</span>
<span class="t" style="left:646.99px;top:1083.00px;font-size:29.36px;color:#000;transform:scaleX(0.9128);-webkit-text-stroke:0.3px #000;">Screenshot</span>
<span class="t" style="left:791.01px;top:1083.00px;font-size:29.36px;color:#000;transform:scaleX(0.9871);-webkit-text-stroke:0.3px #000;">2023-10-0...</span>
<span class="t" style="left:1048.55px;top:1083.00px;font-size:29.36px;color:#000;transform:scaleX(0.9489);-webkit-text-stroke:0.3px #000;">png</span>
<span class="t" style="left:1250.20px;top:1083.00px;font-size:29.36px;color:#000;transform:scaleX(0.9178);-webkit-text-stroke:0.3px #000;">Amelia</span>
<span class="t" style="left:1342.22px;top:1083.00px;font-size:29.36px;color:#000;transform:scaleX(0.8875);-webkit-text-stroke:0.3px #000;">B</span>
<span class="t" style="left:1514.51px;top:1083.00px;font-size:29.36px;color:#000;transform:scaleX(0.9935);-webkit-text-stroke:0.3px #000;">02</span>
<span class="t" style="left:1555.12px;top:1083.00px;font-size:29.36px;color:#000;transform:scaleX(0.9800);-webkit-text-stroke:0.3px #000;">Oct</span>
<span class="t" style="left:1607.51px;top:1083.00px;font-size:29.36px;color:#000;transform:scaleX(0.9921);-webkit-text-stroke:0.3px #000;">2023</span>
<span class="t" style="left:1679.13px;top:1083.00px;font-size:29.36px;color:#000;transform:scaleX(0.9722);-webkit-text-stroke:0.3px #000;">03:15</span>
<span class="t" style="left:1758.86px;top:1083.00px;font-size:29.36px;color:#000;transform:scaleX(0.9725);-webkit-text-stroke:0.3px #000;">PM</span>
<span class="t" style="left:1960.91px;top:1083.00px;font-size:29.36px;color:#000;transform:scaleX(0.9935);-webkit-text-stroke:0.3px #000;">02</span>
<span class="t" style="left:2001.52px;top:1083.00px;font-size:29.36px;color:#000;transform:scaleX(0.9800);-webkit-text-stroke:0.3px #000;">Oct</span>
<span class="t" style="left:2053.91px;top:1083.00px;font-size:29.36px;color:#000;transform:scaleX(0.9921);-webkit-text-stroke:0.3px #000;">2023</span>
<span class="t" style="left:2125.53px;top:1083.00px;font-size:29.36px;color:#000;transform:scaleX(0.9722);-webkit-text-stroke:0.3px #000;">03:15</span>
<span class="t" style="left:2205.25px;top:1083.00px;font-size:29.36px;color:#000;transform:scaleX(0.9725);-webkit-text-stroke:0.3px #000;">PM</span>
<span class="t" style="left:2391.35px;top:1083.00px;font-size:29.36px;color:#000;transform:scaleX(0.9759);-webkit-text-stroke:0.3px #000;">1.17</span>
<span class="t" style="left:2453.81px;top:1083.00px;font-size:29.36px;color:#000;transform:scaleX(0.9951);-webkit-text-stroke:0.3px #000;">MB</span>
<div style="left:2620px;top:312px;width:223px;height:224px;background:#fff;background-clip:padding-box;border:2px solid rgba(0,0,0,.16);border-radius:4px;box-shadow:0 12px 25px rgba(0,0,0,.22);"></div>
<div style="left:2622px;top:424px;width:223px;height:2px;background:#f1f1f1;"></div>
<div style="left:2622px;top:536px;width:223px;height:2px;background:#f1f1f1;"></div>
<div style="left:2620px;top:244px;width:227px;height:60px;border-bottom:4px solid #2560c4;border-radius:9px;background:linear-gradient(#46a1ec,#327cf3);"></div>
<span class="t" style="left:2660.27px;top:262.00px;font-size:29.22px;color:#fff;transform:scaleX(0.9326);z-index:5;-webkit-text-stroke:0.3px #fff;">Create</span>
<span class="t" style="left:2749.78px;top:262.00px;font-size:29.22px;color:#fff;transform:scaleX(0.9596);z-index:5;-webkit-text-stroke:0.3px #fff;">New</span>
<span class="t" style="left:2671.51px;top:355.00px;font-size:29.36px;color:#000;transform:scaleX(0.9432);z-index:5;-webkit-text-stroke:0.3px #000;">Folder</span>
<span class="t" style="left:2671.49px;top:467.00px;font-size:29.36px;color:#000;transform:scaleX(0.9545);z-index:5;-webkit-text-stroke:0.3px #000;">File</span>
<div style="left:2574px;top:223px;width:289px;height:353px;border:5px solid #8b1c12;box-shadow:0 0 5px rgba(0,0,0,.45), inset 0 0 5px rgba(0,0,0,.35);"></div>
</div>
</body>
</html>
